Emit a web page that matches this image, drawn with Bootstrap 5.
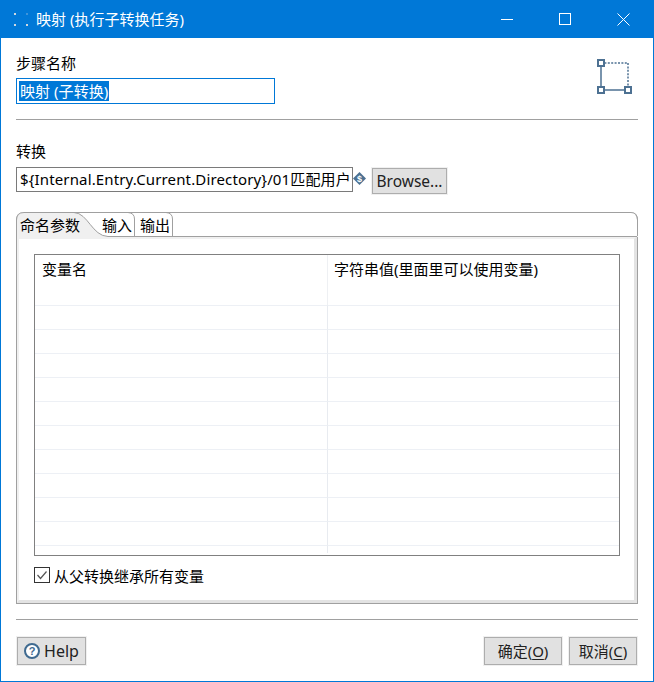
<!DOCTYPE html>
<html lang="zh-CN">
<head>
<meta charset="utf-8">
<title>映射</title>
<link href="https://cdn.jsdelivr.net/npm/bootstrap@5.3.0/dist/css/bootstrap.min.css" rel="stylesheet">
<style>
html,body{margin:0;background:#fff}
body{width:654px;height:682px;overflow:hidden;font-family:"Noto Sans","Noto Sans CJK SC",sans-serif;font-size:15px;line-height:20px;color:#000}
.win{width:654px;height:682px;border:1px solid #0078d7;border-top:0;display:flex;flex-direction:column}
.ttl{height:38px;background:#0078d7;color:#fff;margin:0 -1px;padding-left:13px;flex:none;font-size:15px}
.ttl-text{margin-left:7px}
.wbtns{margin-left:auto;margin-right:24px;gap:40px}
.bodyw{flex:1;padding:0 15px;display:flex;flex-direction:column;min-height:0}
.lbl{height:20px}
.l1{margin-top:15px}
.namebox{width:259px;height:26px;margin-top:5px;border:1px solid #0078d7;padding:0 2px;line-height:24px;white-space:nowrap;overflow:hidden}
.sel{background:#0078d7;color:#fff;display:inline-block;height:20px;line-height:20px;width:90px;padding-left:1px;vertical-align:middle;margin-top:-3px;letter-spacing:.05px}
.stepicon{margin-top:-14px;margin-right:6px}
.hr1{height:1px;background:#a0a0a0;flex:none}
.hr-a{margin-top:15px;width:622px}
.l2{margin-top:21px}
.pathbox{width:337px;height:25px;border:1px solid #7a7a7a;padding:0 3px;line-height:23px;white-space:nowrap;overflow:hidden;letter-spacing:.14px}
.row2{margin-top:6px}
.varicon{margin:5px 6px 0 0;align-self:flex-start}
.wbtn.btn{--bs-btn-font-size:15px;--bs-btn-padding-x:0;--bs-btn-padding-y:0;--bs-btn-border-radius:0;--bs-btn-color:#222;--bs-btn-bg:#e1e1e1;--bs-btn-border-color:#adadad;--bs-btn-hover-bg:#e1e1e1;--bs-btn-hover-border-color:#adadad;--bs-btn-hover-color:#222;outline:1px solid #f0f0f0;display:flex;align-items:center;justify-content:center;height:26px;line-height:20px}
.br{width:75px;margin-top:1px;--bs-btn-font-size:15.5px!important}
.folder{width:622px;height:392px;margin-top:18px;border:1px solid #a0a0a0;border-top:0;border-top-left-radius:8px;border-top-right-radius:8px;position:relative;flex:none}
.tabart{position:absolute;left:-1px;top:0}
.tabs{position:relative;height:24px;padding-left:3px;font-size:15px;line-height:26px}
.tb1{width:79px}.tb2{width:38px;margin-left:3px}.tb3{width:38px}
.pane{height:367px;border:3px solid #f0f0f0;border-bottom-color:#e3e3e3;border-right-color:#e3e3e3;border-left-width:2px;padding:15px 15px 0 15px}
.grid{width:586px;height:302px;border:1px solid #808080;background:#fff;display:grid;grid-template-columns:293px 1fr;grid-template-rows:50px repeat(10,24px) 1fr;padding-bottom:2px}
.hcell{padding:4px 6px 0 7px;border-right:1px solid #eef0f3}
.hcell:nth-child(2n){border-right:0;padding-left:6px}
.gc{border-top:1px solid #edf0f5;border-right:1px solid #e8ebf0}
.gc:nth-child(2n){border-right:0}
.chk{margin-top:10px;gap:4px}
.chkb{width:16px;height:16px;border:1px solid #333;display:block;margin-top:-2px}
.hr-b{margin-top:15px;width:622px}
.foot{margin-top:17px;padding:0 1px 0 1px}
.hp{width:69px;height:28px!important;gap:4px;--bs-btn-font-size:16px!important}
.ok{width:78px;height:28px!important;margin-left:auto}
.ca{width:68px;height:28px!important;margin-left:7px}
u{text-underline-offset:2px}
</style>
</head>
<body>
<div class="win">
  <div class="ttl d-flex align-items-center">
    <svg width="16" height="16" viewBox="0 0 16 16"><g fill="#cfd8e0"><rect x="1" y="2" width="2" height="2"/><rect x="13" y="2" width="2" height="2" opacity=".3"/><rect x="1" y="13" width="2" height="2"/><rect x="13" y="13" width="2" height="2"/></g></svg>
    <span class="ttl-text">映射 (执行子转换任务)</span>
    <div class="wbtns d-flex align-items-center">
      <svg width="12" height="12" viewBox="0 0 12 12"><path d="M0 6.5h12" stroke="#fff"/></svg>
      <svg width="12" height="12" viewBox="0 0 12 12" style="margin-left:6px"><rect x=".5" y=".5" width="11" height="11" fill="none" stroke="#fff"/></svg>
      <svg width="13" height="13" viewBox="0 0 13 13" style="margin-left:6px"><path d="M.5.5l12 12M12.5.5l-12 12" stroke="#fff"/></svg>
    </div>
  </div>
  <div class="bodyw">
    <div class="lbl l1">步骤名称</div>
    <div class="d-flex justify-content-between align-items-start">
      <div class="namebox"><span class="sel">映射 (子转换)</span></div>
      <svg class="stepicon" width="36" height="36" viewBox="0 0 36 36"><path d="M5 4h27M32 4v28" stroke="#4d7192" stroke-width="1.5" stroke-dasharray="2 1.4" fill="none"/><path d="M5 4v27h27" stroke="#4d7192" stroke-width="1.5" fill="none"/><g fill="#fff" stroke="#4d7192" stroke-width="2"><rect x="2" y="1" width="6" height="6"/><rect x="2" y="28" width="6" height="6"/><rect x="29" y="28" width="6" height="6"/></g></svg>
    </div>
    <div class="hr1 hr-a"></div>
    <div class="lbl l2">转换</div>
    <div class="d-flex row2">
      <div class="pathbox">${Internal.Entry.Current.Directory}/01匹配用户</div>
      <svg class="varicon" width="13" height="13" viewBox="0 0 13 13"><path d="M6.5 0L13 6.5 6.5 13 0 6.5z" fill="#4d7192"/><text x="6.5" y="9.5" text-anchor="middle" font-size="9" font-weight="700" font-family="Liberation Sans" fill="#fff">$</text></svg>
      <button type="button" class="btn wbtn br">Browse...</button>
    </div>
    <div class="folder">
      <svg class="tabart" width="622" height="25" viewBox="0 0 622 25">
        <path d="M1 25V8Q1 1 8 .5H58C72 1 76 24 92 24H622V25H0z" fill="#f0f0f0" stroke="none"/>
        <path d="M.5 25V8Q.5 .5 8 .5H615Q621.500 .5 621.500 8" fill="none" stroke="#a0a0a0"/>
        <path d="M58 .5C72 1 76 24 92 24.500H621" fill="none" stroke="#a0a0a0"/>
        <path d="M112 .5Q118.500 1 118.500 7V24M150 .5Q156.500 1 156.500 7V24" fill="none" stroke="#a0a0a0"/>
      </svg>
      <div class="tabs d-flex">
        <div class="tb1">命名参数</div>
        <div class="tb2">输入</div>
        <div class="tb3">输出</div>
      </div>
      <div class="pane">
        <div class="grid">
          <div class="hcell">变量名</div><div class="hcell">字符串值(里面里可以使用变量)</div>
          <div class="gc"></div><div class="gc"></div>
          <div class="gc"></div><div class="gc"></div>
          <div class="gc"></div><div class="gc"></div>
          <div class="gc"></div><div class="gc"></div>
          <div class="gc"></div><div class="gc"></div>
          <div class="gc"></div><div class="gc"></div>
          <div class="gc"></div><div class="gc"></div>
          <div class="gc"></div><div class="gc"></div>
          <div class="gc"></div><div class="gc"></div>
          <div class="gc"></div><div class="gc"></div>
          <div class="gc"></div><div class="gc"></div>
        </div>
        <div class="chk d-flex align-items-center">
          <svg class="chkb" viewBox="0 0 14 14"><path d="M2.500 7l3 3.500 6-7" fill="none" stroke="#555" stroke-width="1.200"/></svg>
          <span>从父转换继承所有变量</span>
        </div>
      </div>
    </div>
    <div class="hr1 hr-b"></div>
    <div class="foot d-flex">
      <button type="button" class="btn wbtn hp"><svg width="16" height="16" viewBox="0 0 16 16"><circle cx="8" cy="8" r="7" fill="#fff" stroke="#3f6a90" stroke-width="2"/><text x="8" y="12" text-anchor="middle" font-size="11" font-weight="700" font-family="Liberation Sans" fill="#3f6a90">?</text></svg><span>Help</span></button>
      <button type="button" class="btn wbtn ok">确定(<u>O</u>)</button>
      <button type="button" class="btn wbtn ca">取消(<u>C</u>)</button>
    </div>
  </div>
</div>
</body>
</html>
